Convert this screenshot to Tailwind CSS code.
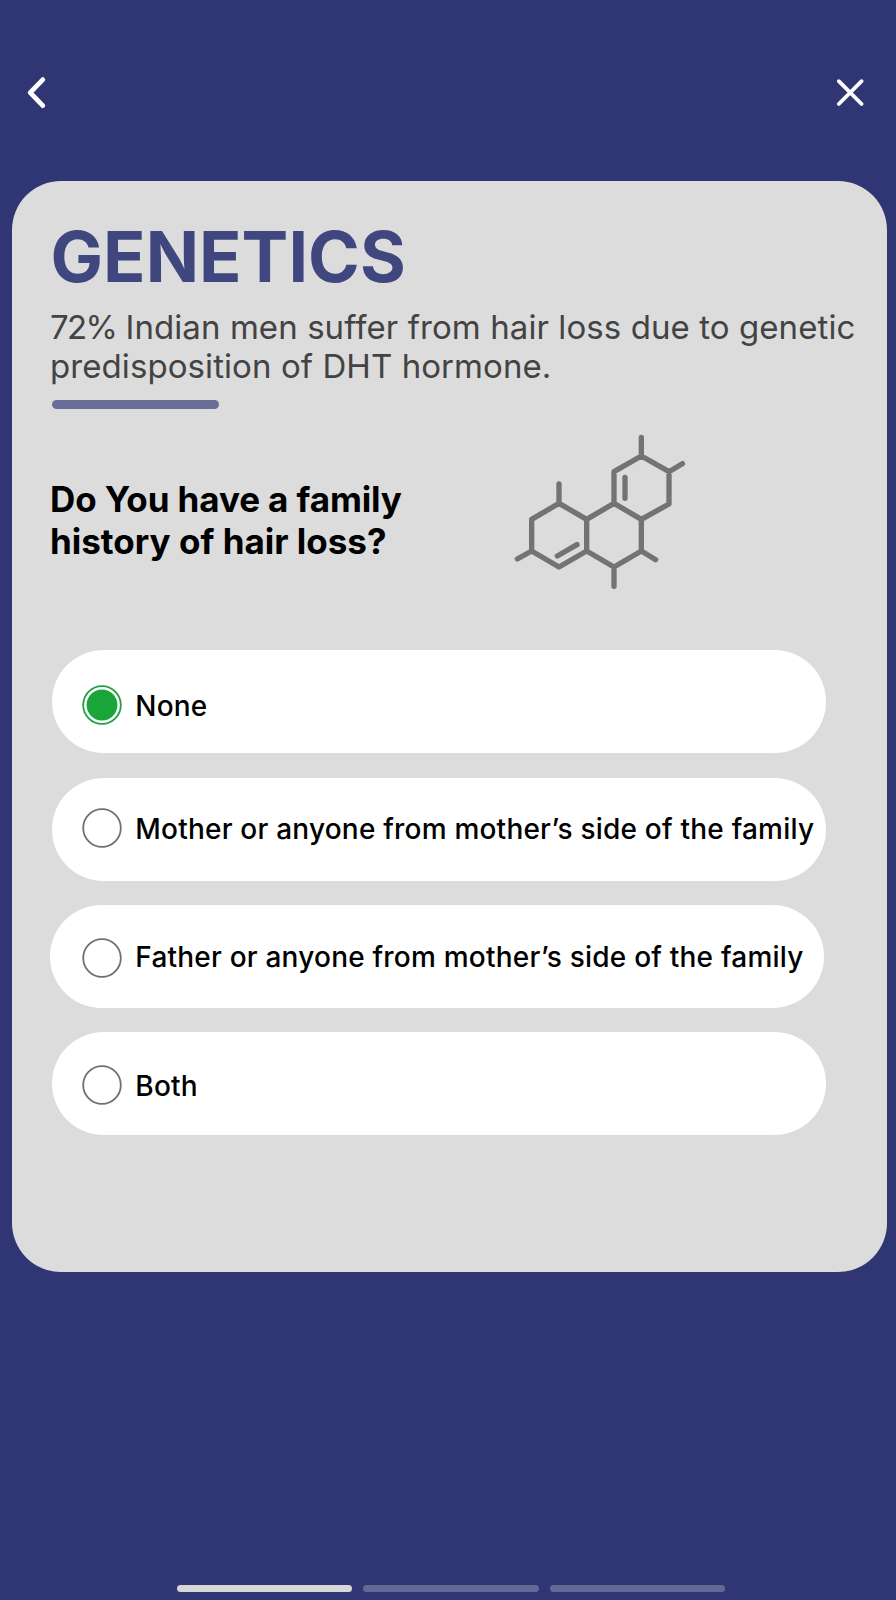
<!DOCTYPE html>
<html lang="en">
<head>
<meta charset="utf-8">
<title>Genetics</title>
<script src="https://cdn.jsdelivr.net/npm/@tailwindcss/browser@4"></script>
</head>
<body class="bg-[#303673] font-['Inter',sans-serif]">
<div class="flex h-[1600px] w-[896px] flex-col overflow-hidden">
  <header class="flex h-[180.5px] shrink-0 items-start justify-between pt-[76px] pl-[24px] pr-[30px]">
    <button aria-label="Back"><svg class="block h-[34px] w-[26px]" viewBox="0 0 26 34" fill="none" stroke="#fff" stroke-width="4.8" stroke-linecap="round" stroke-linejoin="round"><path d="M18.8 3.6 6.2 16.6 18.8 29.6"/></svg></button>
    <button aria-label="Close"><svg class="block h-[34px] w-[32px]" viewBox="0 0 32 34" fill="none" stroke="#fff" stroke-width="3.8" stroke-linecap="round"><path d="M4.8 5.2 27.6 28M27.6 5.2 4.8 28"/></svg></button>
  </header>
  <main class="ml-[12.3px] flex h-[1091px] w-[875px] shrink-0 flex-col rounded-[49px] bg-[#dcdcdc] pl-[37.7px]">
    <h1 class="mt-[33px] ml-[0.5px] h-[85px] text-[70px]/[85px] font-bold tracking-[0.05px] whitespace-nowrap text-[#40477e]">GENETICS</h1>
    <p class="mt-[9px] text-[33px]/[39.6px] tracking-[0.08px] whitespace-nowrap text-[#434343]"><span class="tracking-[-1.7px]">72%</span> Indian men suffer from hair loss due to genetic<br>predisposition of DHT hormone.</p>
    <div class="mt-[13.3px] ml-[2px] h-[9px] w-[167px] rounded-full bg-[#696e98]"></div>
    <section class="mt-[11px] flex h-[180px]">
      <h2 class="mt-[59px] w-[450px] text-[35px]/[41.6px] font-bold whitespace-nowrap text-black"><span class="tracking-[-0.1px]">Do You have a family</span><br>history of hair loss?</h2>
      <svg class="h-[180px] w-[200px]" viewBox="0 0 600 540" fill="none" stroke="#737373" stroke-width="16" stroke-linecap="round" stroke-linejoin="round"><path d="M424 108 507 155V252L424 298 342 250V155ZM424 298V393L342 441 260 393V298L342 250M260 298 177 250 95 298V393L177 441 260 393M424 108V52M507 155 547 131M177 250V192M95 393 52 417M342 441V499M424 393 467 419M375 172V235M172 408 231 374"/></svg>
    </section>
    <div class="mt-[50.3px] ml-[2px] flex w-[774px] flex-col gap-[24.4px] text-[28px]/[34px] font-medium tracking-[0.21px] whitespace-nowrap text-black">
      <div class="flex h-[103px] items-start gap-[13px] rounded-full bg-white pl-[30.3px]">
        <svg class="mt-[35px] size-10 shrink-0" viewBox="0 0 40 40"><circle cx="20" cy="20" r="18.8" fill="none" stroke="#1f9f40" stroke-width="1.8"/><circle cx="20" cy="20" r="15.4" fill="#1aa539"/></svg>
        <span class="mt-[39px]">None</span>
      </div>
      <div class="flex h-[103px] items-start gap-[13px] rounded-full bg-white pl-[30.3px]">
        <svg class="mt-[30.5px] size-10 shrink-0" viewBox="0 0 40 40"><circle cx="20" cy="20" r="18.8" fill="none" stroke="#707070" stroke-width="1.8"/></svg>
        <span class="mt-[34.5px]">Mother or anyone from mother’s side of the family</span>
      </div>
      <div class="-ml-[2.3px] mr-[2.3px] flex h-[103px] items-start gap-[13px] rounded-full bg-white pl-[32.6px]">
        <svg class="mt-[32.7px] size-10 shrink-0" viewBox="0 0 40 40"><circle cx="20" cy="20" r="18.8" fill="none" stroke="#707070" stroke-width="1.8"/></svg>
        <span class="mt-[34.5px]">Father or anyone from mother’s side of the family</span>
      </div>
      <div class="flex h-[103px] items-start gap-[13px] rounded-full bg-white pl-[30.3px]">
        <svg class="mt-[32.7px] size-10 shrink-0" viewBox="0 0 40 40"><circle cx="20" cy="20" r="18.8" fill="none" stroke="#707070" stroke-width="1.8"/></svg>
        <span class="mt-[36.8px]">Both</span>
      </div>
    </div>
  </main>
  <footer class="mt-auto flex gap-[11px] pb-[8px] pl-[176.7px]">
    <div class="h-[7px] w-[175.5px] rounded-full bg-[#d7d7d8]"></div>
    <div class="h-[7px] w-[175.5px] rounded-full bg-[#646895]"></div>
    <div class="h-[7px] w-[175.5px] rounded-full bg-[#646895]"></div>
  </footer>
</div>
</body>
</html>
